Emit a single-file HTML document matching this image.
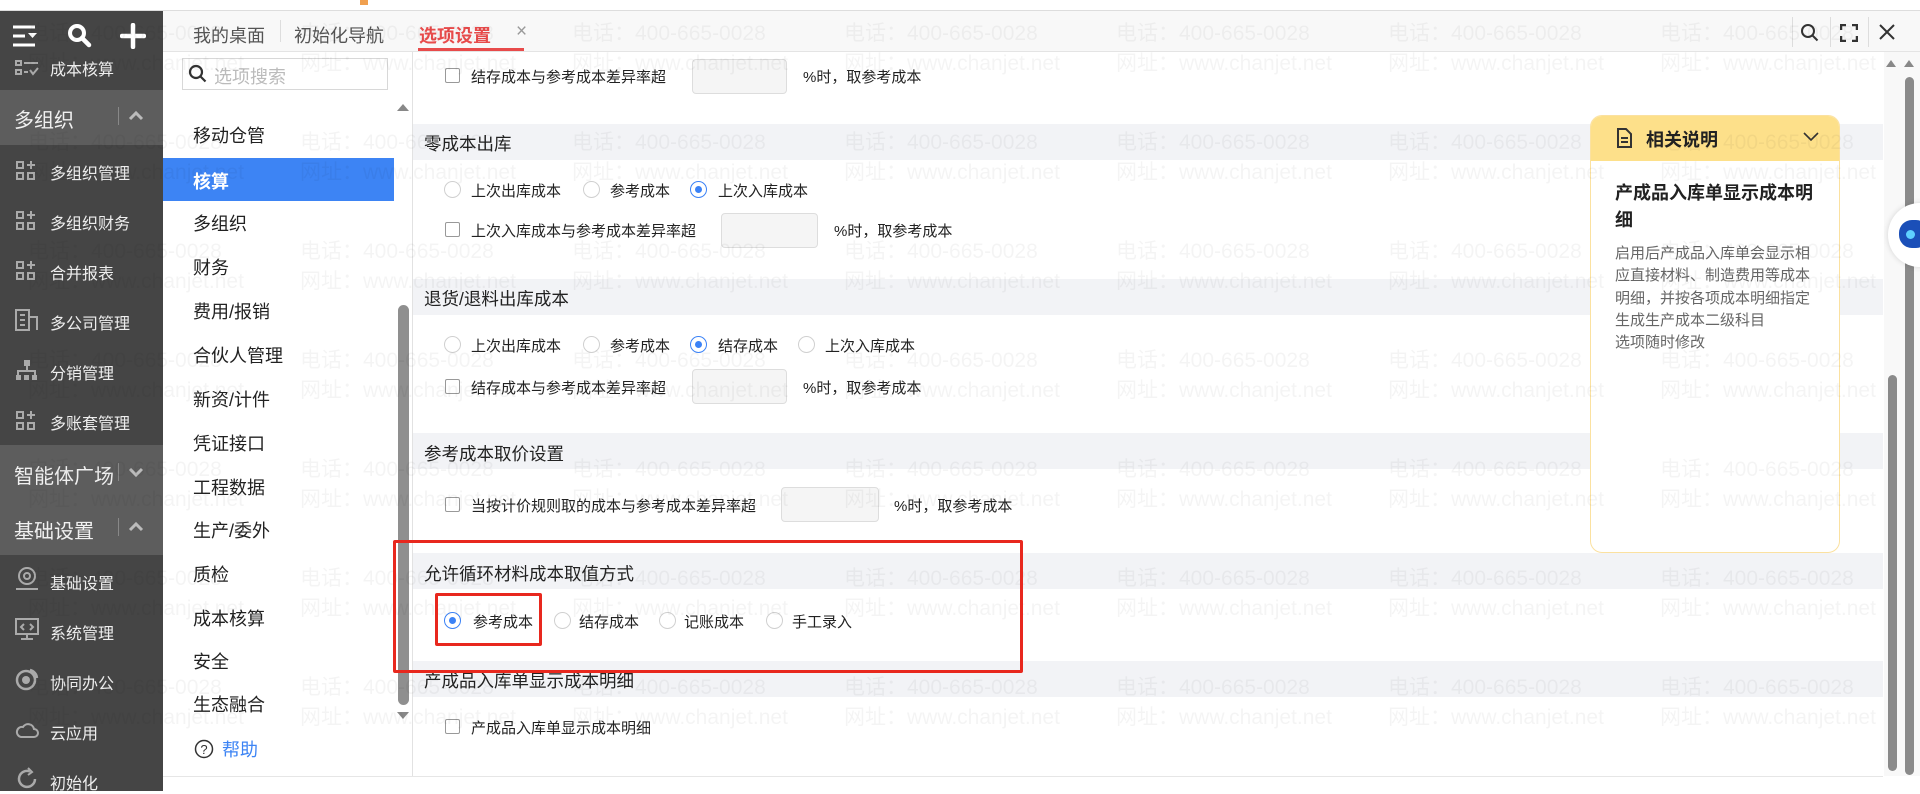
<!DOCTYPE html>
<html><head><meta charset="utf-8">
<style>
*{margin:0;padding:0;box-sizing:border-box}
body{width:1920px;height:791px;overflow:hidden;background:#fff;font-family:"Liberation Sans","Noto Sans CJK SC",sans-serif;position:relative;color:#222}
.a{position:absolute;white-space:nowrap}
.wm{position:absolute;white-space:nowrap;font-size:21px;color:rgba(0,0,0,0.045);font-family:"Liberation Sans","Noto Sans CJK SC",sans-serif;pointer-events:none;z-index:50}
.sb{position:absolute;left:0;top:11px;width:163px;height:780px;background:#454545}
.grp{position:absolute;left:0;width:163px;background:#5d5d5d}
.gt{position:absolute;left:14px;font-size:20px;color:#f0f0f0}
.it{position:absolute;left:50px;font-size:16px;color:#eee}
.ic{position:absolute;left:15px}
.m{position:absolute;left:193px;font-size:18px;color:#222}
.band{position:absolute;left:413px;width:1470px;height:36px;background:#f2f3f6}
.h{position:absolute;left:424px;font-size:17.5px;color:#222}
.t{position:absolute;font-size:15px;color:#222}
.cb{position:absolute;width:15px;height:15px;border:1px solid #999;border-radius:2px;background:#fff}
.rd{position:absolute;width:17px;height:17px;border:1px solid #d0d0d0;border-radius:50%;background:#fff}
.rd.on{border-color:#3b82f6}
.rd.on:after{content:"";position:absolute;left:4px;top:4px;width:7px;height:7px;border-radius:50%;background:#3b82f6}
.inp{position:absolute;height:35px;border:1px solid #ddd;border-radius:4px;background:#f5f5f5}
</style></head><body>
<div class="a" style="left:360px;top:0;width:8px;height:5px;background:#f0a050"></div>
<div class="a" style="left:0;top:10px;width:1920px;height:1px;background:#ddd"></div>

<!-- sidebar -->
<div class="sb"></div>
<svg class="a" style="left:12px;top:24px" width="26" height="24" viewBox="0 0 26 24"><g stroke="#fff" stroke-width="3" fill="none"><path d="M1 3h22M1 12h12M1 21h22"/></g><path d="M16 9h9l-4.5 5z" fill="#fff"/></svg>
<svg class="a" style="left:67px;top:23px" width="26" height="26" viewBox="0 0 26 26"><circle cx="10" cy="10" r="7" stroke="#fff" stroke-width="4" fill="none"/><path d="M15 15l7 7" stroke="#fff" stroke-width="4.5" stroke-linecap="round"/></svg>
<svg class="a" style="left:120px;top:23px" width="26" height="26"><path d="M13 2v22M2 13h22" stroke="#fff" stroke-width="4.5" stroke-linecap="round"/></svg>
<svg class="ic" style="top:60px" width="24" height="16"><g fill="none" stroke="#aaa" stroke-width="2"><rect x="1" y="1" width="5" height="4"/><rect x="1" y="10" width="5" height="4"/><path d="M9 3h14M9 12h4M15 10l3 4 5-6"/></g></svg>
<div class="it" style="top:56px">成本核算</div>
<div class="grp" style="top:90px;height:55px"></div>
<div class="gt" style="top:104px">多组织</div>
<div class="a" style="left:118px;top:107px;width:1px;height:18px;background:#888"></div>
<svg class="a" style="left:128px;top:110px" width="16" height="12"><path d="M2 9l6-6 6 6" stroke="#bbb" stroke-width="3" fill="none"/></svg>
<div class="it" style="top:160px">多组织管理</div>
<div class="it" style="top:210px">多组织财务</div>
<div class="it" style="top:260px">合并报表</div>
<div class="it" style="top:310px">多公司管理</div>
<div class="it" style="top:360px">分销管理</div>
<div class="it" style="top:410px">多账套管理</div>
<svg class="ic" style="top:160px" width="22" height="22"><g fill="none" stroke="#aaa" stroke-width="2"><rect x="2" y="2" width="6" height="6"/><rect x="2" y="13" width="6" height="6"/><rect x="13" y="13" width="6" height="6"/><path d="M16 1v8M12 5h8"/></g></svg>
<svg class="ic" style="top:210px" width="22" height="22"><g fill="none" stroke="#aaa" stroke-width="2"><rect x="2" y="2" width="6" height="6"/><rect x="2" y="13" width="6" height="6"/><rect x="13" y="13" width="6" height="6"/><path d="M16 1v8M12 5h8"/></g></svg>
<svg class="ic" style="top:260px" width="22" height="22"><g fill="none" stroke="#aaa" stroke-width="2"><rect x="2" y="2" width="6" height="6"/><rect x="2" y="13" width="6" height="6"/><rect x="13" y="13" width="6" height="6"/><path d="M16 1v8M12 5h8"/></g></svg>
<svg class="ic" style="top:308px" width="24" height="24"><g fill="none" stroke="#aaa" stroke-width="2"><rect x="1" y="2" width="13" height="20"/><path d="M14 9h8v13M5 7h5M5 12h5M5 17h5"/></g></svg>
<svg class="ic" style="top:358px" width="24" height="24"><g fill="#aaa"><rect x="9" y="2" width="6" height="6"/><rect x="1" y="17" width="5" height="5"/><rect x="9" y="17" width="5" height="5"/><rect x="17" y="17" width="5" height="5"/></g><path d="M12 8v5M3 17v-4h17v4" stroke="#aaa" stroke-width="2" fill="none"/></svg>
<svg class="ic" style="top:410px" width="22" height="22"><g fill="none" stroke="#aaa" stroke-width="2"><rect x="2" y="2" width="6" height="6"/><rect x="2" y="13" width="6" height="6"/><rect x="13" y="13" width="6" height="6"/><path d="M16 1v8M12 5h8"/></g></svg>
<div class="grp" style="top:445px;height:110px"></div>
<div class="gt" style="top:460px">智能体广场</div>
<div class="a" style="left:118px;top:463px;width:1px;height:18px;background:#888"></div>
<svg class="a" style="left:128px;top:466px" width="16" height="12"><path d="M2 3l6 6 6-6" stroke="#bbb" stroke-width="3" fill="none"/></svg>
<div class="gt" style="top:515px">基础设置</div>
<div class="a" style="left:118px;top:518px;width:1px;height:18px;background:#888"></div>
<svg class="a" style="left:128px;top:521px" width="16" height="12"><path d="M2 9l6-6 6 6" stroke="#bbb" stroke-width="3" fill="none"/></svg>
<div class="it" style="top:570px">基础设置</div>
<div class="it" style="top:620px">系统管理</div>
<div class="it" style="top:670px">协同办公</div>
<div class="it" style="top:720px">云应用</div>
<div class="it" style="top:770px">初始化</div>
<svg class="ic" style="top:566px" width="24" height="26"><g fill="none" stroke="#aaa" stroke-width="2"><circle cx="12" cy="10" r="8"/><circle cx="12" cy="10" r="3"/><path d="M1 23h22"/></g></svg>
<svg class="ic" style="top:617px" width="24" height="24"><g fill="none" stroke="#aaa" stroke-width="2"><rect x="1" y="2" width="22" height="15"/><path d="M12 17v4M6 22h12M9 7l-3 3 3 3M15 7l3 3-3 3"/></g></svg>
<svg class="ic" style="top:667px" width="24" height="24"><g fill="none" stroke="#aaa" stroke-width="2.5"><circle cx="11" cy="13" r="9"/><path d="M15 3a9 9 0 0 1 7 8"/></g><circle cx="11" cy="13" r="4" fill="#aaa"/></svg>
<svg class="ic" style="top:720px" width="24" height="20"><path d="M6 17h13a4 4 0 0 0 0-8 6 6 0 0 0-11-2A5 5 0 0 0 6 17z" fill="none" stroke="#aaa" stroke-width="2"/></svg>
<svg class="ic" style="top:767px" width="24" height="24"><path d="M20 12a8 8 0 1 1-5-7.5" fill="none" stroke="#aaa" stroke-width="2.5"/><path d="M13 1l4 4-4 3" fill="none" stroke="#aaa" stroke-width="2"/></svg>

<!-- tab bar -->
<div class="a" style="left:163px;top:11px;width:1757px;height:41px;background:#f8f8f8;border-bottom:1px solid #e4e4e4"></div>
<div class="a" style="left:193px;top:22px;font-size:18px;color:#555">我的桌面</div>
<div class="a" style="left:280px;top:20px;width:1px;height:22px;background:#ddd"></div>
<div class="a" style="left:294px;top:22px;font-size:18px;color:#555">初始化导航</div>
<div class="a" style="left:419px;top:22px;font-size:18px;color:#e84b4b;font-weight:bold">选项设置</div>
<div class="a" style="left:516px;top:21px;font-size:19px;color:#999">×</div>
<div class="a" style="left:418px;top:48px;width:106px;height:3px;background:#e84b4b"></div>
<div class="a" style="left:1792px;top:17px;width:1px;height:30px;background:#ddd"></div>
<div class="a" style="left:1830px;top:17px;width:1px;height:30px;background:#ddd"></div>
<div class="a" style="left:1868px;top:17px;width:1px;height:30px;background:#ddd"></div>
<svg class="a" style="left:1800px;top:23px" width="20" height="20"><circle cx="8" cy="8" r="6" stroke="#333" stroke-width="2" fill="none"/><path d="M12.5 12.5l5 5" stroke="#333" stroke-width="2"/></svg>
<svg class="a" style="left:1840px;top:24px" width="18" height="18"><path d="M1 6V1h5M12 1h5v5M17 12v5h-5M6 17H1v-5" stroke="#333" stroke-width="2.5" fill="none"/></svg>
<svg class="a" style="left:1878px;top:23px" width="18" height="18"><path d="M2 2l14 14M16 2L2 16" stroke="#333" stroke-width="2"/></svg>

<!-- second column -->
<div class="a" style="left:182px;top:58px;width:206px;height:32px;border:1px solid #d8d8d8;background:#fff"></div>
<svg class="a" style="left:188px;top:64px" width="20" height="20"><circle cx="8" cy="8" r="6" stroke="#333" stroke-width="2.2" fill="none"/><path d="M12.5 12.5l5 5" stroke="#333" stroke-width="2.2"/></svg>
<div class="a" style="left:214px;top:63px;font-size:18px;color:#bbb">选项搜索</div>
<div class="m" style="top:122px">移动仓管</div>
<div class="a" style="left:163px;top:158px;width:231px;height:43px;background:#3d84f4"></div>
<div class="m" style="top:168px;color:#fff;font-weight:bold">核算</div>
<div class="m" style="top:210px">多组织</div>
<div class="m" style="top:254px">财务</div>
<div class="m" style="top:298px">费用/报销</div>
<div class="m" style="top:342px">合伙人管理</div>
<div class="m" style="top:386px">新资/计件</div>
<div class="m" style="top:430px">凭证接口</div>
<div class="m" style="top:474px">工程数据</div>
<div class="m" style="top:517px">生产/委外</div>
<div class="m" style="top:561px">质检</div>
<div class="m" style="top:605px">成本核算</div>
<div class="m" style="top:648px">安全</div>
<div class="m" style="top:691px">生态融合</div>
<svg class="a" style="left:194px;top:739px" width="20" height="20"><circle cx="10" cy="10" r="8.5" stroke="#333" stroke-width="1.5" fill="none"/><text x="10" y="15" font-size="13" text-anchor="middle" fill="#333" font-family="Liberation Sans">?</text></svg>
<div class="m" style="top:736px;left:222px;color:#3d84f4">帮助</div>
<svg class="a" style="left:397px;top:102px" width="12" height="10"><path d="M0 9L6 2l6 7z" fill="#888"/></svg>
<div class="a" style="left:398px;top:305px;width:11px;height:400px;border-radius:6px;background:#8f8f8f"></div>
<svg class="a" style="left:397px;top:711px" width="12" height="10"><path d="M0 1h12L6 8z" fill="#888"/></svg>
<div class="a" style="left:412px;top:52px;width:1px;height:724px;background:#e2e2e2"></div>

<!-- content -->
<div class="cb" style="left:445px;top:68px"></div>
<div class="t" style="left:471px;top:66px">结存成本与参考成本差异率超</div>
<div class="inp" style="left:692px;top:59px;width:95px"></div>
<div class="t" style="left:803px;top:66px">%时，取参考成本</div>

<div class="band" style="top:124px"></div>
<div class="h" style="top:131px">零成本出库</div>
<div class="rd" style="left:444px;top:181px"></div><div class="t" style="left:471px;top:180px">上次出库成本</div>
<div class="rd" style="left:583px;top:181px"></div><div class="t" style="left:610px;top:180px">参考成本</div>
<div class="rd on" style="left:690px;top:181px"></div><div class="t" style="left:718px;top:180px">上次入库成本</div>
<div class="cb" style="left:445px;top:222px"></div>
<div class="t" style="left:471px;top:220px">上次入库成本与参考成本差异率超</div>
<div class="inp" style="left:721px;top:213px;width:97px"></div>
<div class="t" style="left:834px;top:220px">%时，取参考成本</div>

<div class="band" style="top:279px"></div>
<div class="h" style="top:286px">退货/退料出库成本</div>
<div class="rd" style="left:444px;top:336px"></div><div class="t" style="left:471px;top:335px">上次出库成本</div>
<div class="rd" style="left:583px;top:336px"></div><div class="t" style="left:610px;top:335px">参考成本</div>
<div class="rd on" style="left:690px;top:336px"></div><div class="t" style="left:718px;top:335px">结存成本</div>
<div class="rd" style="left:798px;top:336px"></div><div class="t" style="left:825px;top:335px">上次入库成本</div>
<div class="cb" style="left:445px;top:379px"></div>
<div class="t" style="left:471px;top:377px">结存成本与参考成本差异率超</div>
<div class="inp" style="left:692px;top:369px;width:95px"></div>
<div class="t" style="left:803px;top:377px">%时，取参考成本</div>

<div class="band" style="top:433px"></div>
<div class="h" style="top:441px">参考成本取价设置</div>
<div class="cb" style="left:445px;top:497px"></div>
<div class="t" style="left:471px;top:495px">当按计价规则取的成本与参考成本差异率超</div>
<div class="inp" style="left:781px;top:487px;width:98px"></div>
<div class="t" style="left:894px;top:495px">%时，取参考成本</div>

<div class="band" style="top:553px"></div>
<div class="h" style="top:561px">允许循环材料成本取值方式</div>
<div class="rd on" style="left:444px;top:612px"></div><div class="t" style="left:473px;top:611px">参考成本</div>
<div class="rd" style="left:554px;top:612px"></div><div class="t" style="left:579px;top:611px">结存成本</div>
<div class="rd" style="left:659px;top:612px"></div><div class="t" style="left:684px;top:611px">记账成本</div>
<div class="rd" style="left:766px;top:612px"></div><div class="t" style="left:792px;top:611px">手工录入</div>

<div class="band" style="top:661px"></div>
<div class="h" style="top:668px">产成品入库单显示成本明细</div>
<div class="cb" style="left:445px;top:719px"></div>
<div class="t" style="left:471px;top:717px">产成品入库单显示成本明细</div>

<div class="a" style="left:393px;top:540px;width:630px;height:133px;border:3.5px solid #e8281e;border-radius:2px;z-index:60"></div>
<div class="a" style="left:435px;top:593px;width:107px;height:53px;border:3.5px solid #e8281e;border-radius:2px;z-index:60"></div>

<div class="a" style="left:163px;top:776px;width:1720px;height:1px;background:#e6e6e6"></div>

<!-- right panel -->
<div class="a" style="left:1590px;top:115px;width:250px;height:438px;border:1px solid #fbe1a0;border-radius:12px;background:#fff;overflow:hidden">
<div style="height:45px;background:#fde08a"></div>
</div>
<svg class="a" style="left:1616px;top:128px" width="16" height="20"><path d="M2 1h8l5 5v13H2z" fill="none" stroke="#333" stroke-width="2"/><path d="M5 10h7M5 14h7" stroke="#333" stroke-width="2"/></svg>
<div class="a" style="left:1646px;top:126px;font-size:18px;font-weight:bold;color:#222">相关说明</div>
<svg class="a" style="left:1803px;top:132px" width="16" height="10"><path d="M1 1l7 7 7-7" stroke="#333" stroke-width="1.6" fill="none"/></svg>
<div class="a" style="left:1615px;top:180px;font-size:18px;font-weight:bold;color:#222;line-height:27px;white-space:normal;width:200px">产成品入库单显示成本明细</div>
<div class="a" style="left:1615px;top:243px;font-size:15px;color:#666;line-height:22.3px;white-space:normal;width:200px">启用后产成品入库单会显示相应直接材料、制造费用等成本明细，并按各项成本明细指定生成生产成本二级科目<br>选项随时修改</div>

<!-- right scrollbars -->
<div class="a" style="left:1884px;top:52px;width:36px;height:724px;background:#f8f8f8"></div>
<svg class="a" style="left:1886px;top:58px" width="32" height="10"><path d="M0 9L5 2l5 7zM18 9l5-7 5 7z" fill="#888"/></svg>
<div class="a" style="left:1888px;top:375px;width:9px;height:396px;border-radius:5px;background:#8a8a8a"></div>
<div class="a" style="left:1905px;top:77px;width:9px;height:698px;border-radius:5px;background:#8a8a8a"></div>
<div class="a" style="left:1888px;top:203px;width:64px;height:64px;border-radius:50%;background:#fff;box-shadow:0 0 6px rgba(0,0,0,.15)"></div>
<div class="a" style="left:1899px;top:220px;width:30px;height:28px;border-radius:13px;background:#1b4fb8"></div>
<div class="a" style="left:1906px;top:230px;width:9px;height:9px;border-radius:50%;background:#5fd0ff"></div>

<!-- watermarks -->
<div id="wms"></div>
<div class="wm" style="left:28px;top:17px">电话：400-665-0028</div><div class="wm" style="left:300px;top:17px">电话：400-665-0028</div><div class="wm" style="left:572px;top:17px">电话：400-665-0028</div><div class="wm" style="left:844px;top:17px">电话：400-665-0028</div><div class="wm" style="left:1116px;top:17px">电话：400-665-0028</div><div class="wm" style="left:1388px;top:17px">电话：400-665-0028</div><div class="wm" style="left:1660px;top:17px">电话：400-665-0028</div>
<div class="wm" style="left:28px;top:47px">网址：www.chanjet.net</div><div class="wm" style="left:300px;top:47px">网址：www.chanjet.net</div><div class="wm" style="left:572px;top:47px">网址：www.chanjet.net</div><div class="wm" style="left:844px;top:47px">网址：www.chanjet.net</div><div class="wm" style="left:1116px;top:47px">网址：www.chanjet.net</div><div class="wm" style="left:1388px;top:47px">网址：www.chanjet.net</div><div class="wm" style="left:1660px;top:47px">网址：www.chanjet.net</div>
<div class="wm" style="left:28px;top:126px">电话：400-665-0028</div><div class="wm" style="left:300px;top:126px">电话：400-665-0028</div><div class="wm" style="left:572px;top:126px">电话：400-665-0028</div><div class="wm" style="left:844px;top:126px">电话：400-665-0028</div><div class="wm" style="left:1116px;top:126px">电话：400-665-0028</div><div class="wm" style="left:1388px;top:126px">电话：400-665-0028</div><div class="wm" style="left:1660px;top:126px">电话：400-665-0028</div>
<div class="wm" style="left:28px;top:156px">网址：www.chanjet.net</div><div class="wm" style="left:300px;top:156px">网址：www.chanjet.net</div><div class="wm" style="left:572px;top:156px">网址：www.chanjet.net</div><div class="wm" style="left:844px;top:156px">网址：www.chanjet.net</div><div class="wm" style="left:1116px;top:156px">网址：www.chanjet.net</div><div class="wm" style="left:1388px;top:156px">网址：www.chanjet.net</div><div class="wm" style="left:1660px;top:156px">网址：www.chanjet.net</div>
<div class="wm" style="left:28px;top:235px">电话：400-665-0028</div><div class="wm" style="left:300px;top:235px">电话：400-665-0028</div><div class="wm" style="left:572px;top:235px">电话：400-665-0028</div><div class="wm" style="left:844px;top:235px">电话：400-665-0028</div><div class="wm" style="left:1116px;top:235px">电话：400-665-0028</div><div class="wm" style="left:1388px;top:235px">电话：400-665-0028</div><div class="wm" style="left:1660px;top:235px">电话：400-665-0028</div>
<div class="wm" style="left:28px;top:265px">网址：www.chanjet.net</div><div class="wm" style="left:300px;top:265px">网址：www.chanjet.net</div><div class="wm" style="left:572px;top:265px">网址：www.chanjet.net</div><div class="wm" style="left:844px;top:265px">网址：www.chanjet.net</div><div class="wm" style="left:1116px;top:265px">网址：www.chanjet.net</div><div class="wm" style="left:1388px;top:265px">网址：www.chanjet.net</div><div class="wm" style="left:1660px;top:265px">网址：www.chanjet.net</div>
<div class="wm" style="left:28px;top:344px">电话：400-665-0028</div><div class="wm" style="left:300px;top:344px">电话：400-665-0028</div><div class="wm" style="left:572px;top:344px">电话：400-665-0028</div><div class="wm" style="left:844px;top:344px">电话：400-665-0028</div><div class="wm" style="left:1116px;top:344px">电话：400-665-0028</div><div class="wm" style="left:1388px;top:344px">电话：400-665-0028</div><div class="wm" style="left:1660px;top:344px">电话：400-665-0028</div>
<div class="wm" style="left:28px;top:374px">网址：www.chanjet.net</div><div class="wm" style="left:300px;top:374px">网址：www.chanjet.net</div><div class="wm" style="left:572px;top:374px">网址：www.chanjet.net</div><div class="wm" style="left:844px;top:374px">网址：www.chanjet.net</div><div class="wm" style="left:1116px;top:374px">网址：www.chanjet.net</div><div class="wm" style="left:1388px;top:374px">网址：www.chanjet.net</div><div class="wm" style="left:1660px;top:374px">网址：www.chanjet.net</div>
<div class="wm" style="left:28px;top:453px">电话：400-665-0028</div><div class="wm" style="left:300px;top:453px">电话：400-665-0028</div><div class="wm" style="left:572px;top:453px">电话：400-665-0028</div><div class="wm" style="left:844px;top:453px">电话：400-665-0028</div><div class="wm" style="left:1116px;top:453px">电话：400-665-0028</div><div class="wm" style="left:1388px;top:453px">电话：400-665-0028</div><div class="wm" style="left:1660px;top:453px">电话：400-665-0028</div>
<div class="wm" style="left:28px;top:483px">网址：www.chanjet.net</div><div class="wm" style="left:300px;top:483px">网址：www.chanjet.net</div><div class="wm" style="left:572px;top:483px">网址：www.chanjet.net</div><div class="wm" style="left:844px;top:483px">网址：www.chanjet.net</div><div class="wm" style="left:1116px;top:483px">网址：www.chanjet.net</div><div class="wm" style="left:1388px;top:483px">网址：www.chanjet.net</div><div class="wm" style="left:1660px;top:483px">网址：www.chanjet.net</div>
<div class="wm" style="left:28px;top:562px">电话：400-665-0028</div><div class="wm" style="left:300px;top:562px">电话：400-665-0028</div><div class="wm" style="left:572px;top:562px">电话：400-665-0028</div><div class="wm" style="left:844px;top:562px">电话：400-665-0028</div><div class="wm" style="left:1116px;top:562px">电话：400-665-0028</div><div class="wm" style="left:1388px;top:562px">电话：400-665-0028</div><div class="wm" style="left:1660px;top:562px">电话：400-665-0028</div>
<div class="wm" style="left:28px;top:592px">网址：www.chanjet.net</div><div class="wm" style="left:300px;top:592px">网址：www.chanjet.net</div><div class="wm" style="left:572px;top:592px">网址：www.chanjet.net</div><div class="wm" style="left:844px;top:592px">网址：www.chanjet.net</div><div class="wm" style="left:1116px;top:592px">网址：www.chanjet.net</div><div class="wm" style="left:1388px;top:592px">网址：www.chanjet.net</div><div class="wm" style="left:1660px;top:592px">网址：www.chanjet.net</div>
<div class="wm" style="left:28px;top:671px">电话：400-665-0028</div><div class="wm" style="left:300px;top:671px">电话：400-665-0028</div><div class="wm" style="left:572px;top:671px">电话：400-665-0028</div><div class="wm" style="left:844px;top:671px">电话：400-665-0028</div><div class="wm" style="left:1116px;top:671px">电话：400-665-0028</div><div class="wm" style="left:1388px;top:671px">电话：400-665-0028</div><div class="wm" style="left:1660px;top:671px">电话：400-665-0028</div>
<div class="wm" style="left:28px;top:701px">网址：www.chanjet.net</div><div class="wm" style="left:300px;top:701px">网址：www.chanjet.net</div><div class="wm" style="left:572px;top:701px">网址：www.chanjet.net</div><div class="wm" style="left:844px;top:701px">网址：www.chanjet.net</div><div class="wm" style="left:1116px;top:701px">网址：www.chanjet.net</div><div class="wm" style="left:1388px;top:701px">网址：www.chanjet.net</div><div class="wm" style="left:1660px;top:701px">网址：www.chanjet.net</div>
</body></html>
